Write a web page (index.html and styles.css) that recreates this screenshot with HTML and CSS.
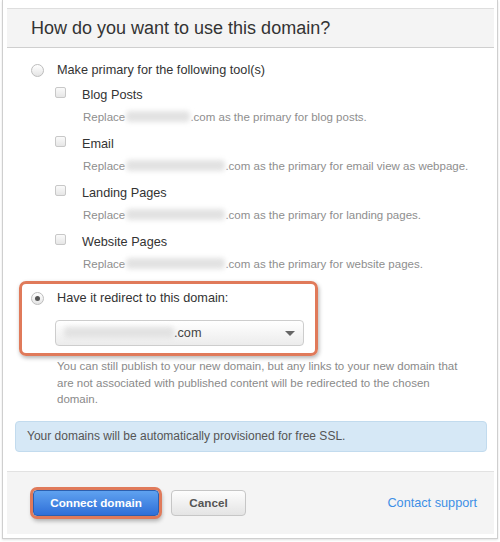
FILE: index.html
```html
<!DOCTYPE html>
<html>
<head>
<meta charset="utf-8">
<link rel="stylesheet" href="styles.css">
</head>
<body>
<div class="frame">
  <div class="modal">
    <div class="header"><h2 class="title">How do you want to use this domain?</h2></div>
    <div class="content">
      <div class="row radio-row">
        <span class="radio"></span>
        <span class="label">Make primary for the following tool(s)</span>
      </div>
      <div class="tools">
        <div class="tool">
          <div class="row"><span class="check"></span><span class="label">Blog Posts</span></div>
          <div class="desc">Replace <span class="blur w62"></span>.com as the primary for blog posts.</div>
        </div>
        <div class="tool">
          <div class="row"><span class="check"></span><span class="label">Email</span></div>
          <div class="desc">Replace <span class="blur w97"></span>.com as the primary for email view as webpage.</div>
        </div>
        <div class="tool">
          <div class="row"><span class="check"></span><span class="label">Landing Pages</span></div>
          <div class="desc">Replace <span class="blur w97"></span>.com as the primary for landing pages.</div>
        </div>
        <div class="tool">
          <div class="row"><span class="check"></span><span class="label">Website Pages</span></div>
          <div class="desc">Replace <span class="blur w97"></span>.com as the primary for website pages.</div>
        </div>
      </div>
      <div class="highlight">
        <div class="row">
          <span class="radio checked"></span>
          <span class="label">Have it redirect to this domain:</span>
        </div>
        <div class="select">
          <span class="select-value"><span class="blur w108"></span>.com</span>
          <span class="caret"></span>
        </div>
      </div>
      <p class="help">You can still publish to your new domain, but any links to your new domain that are not associated with published content will be redirected to the chosen domain.</p>
      <div class="alert">Your domains will be automatically provisioned for free SSL.</div>
    </div>
    <div class="footer">
      <div class="buttons">
        <button class="btn btn-primary">Connect domain</button>
        <button class="btn btn-default">Cancel</button>
      </div>
      <a class="link" href="#">Contact support</a>
    </div>
  </div>
</div>
</body>
</html>
```

FILE: styles.css
```css
* { box-sizing: border-box; }
html, body { margin: 0; padding: 0; background: #fff; }
body {
  width: 500px;
  height: 542px;
  overflow: hidden;
  font-family: "Liberation Sans", Arial, sans-serif;
  color: #333;
}
.frame {
  margin-left: 2px;
  width: 496px;
  height: 539px;
  border: 1px solid #cfcfcf;
  border-top: none;
  box-shadow: 0 1px 2px rgba(0,0,0,0.12);
  padding: 8px 3px 0 4px;
}
.modal { display: flex; flex-direction: column; }
.header {
  height: 40px;
  background: #f4f4f4;
  border-top: 1px solid #dedede;
  border-bottom: 1px solid #cfcfcf;
  display: flex;
  align-items: center;
  padding-left: 24px;
}
.title {
  margin: 0;
  font-weight: normal;
  font-size: 18px;
  color: #333;
}
.content {
  padding: 12px 7px 19px 0;
}
.row {
  display: flex;
  align-items: center;
  height: 20px;
}
.radio-row { margin-left: 24px; }
.label { font-size: 12.7px; color: #333; }
.radio {
  width: 13px;
  height: 13px;
  border-radius: 50%;
  border: 1px solid #bdbdbd;
  background: linear-gradient(#fff, #e4e4e4);
  margin-right: 13px;
  position: relative;
  flex: none;
}
.radio.checked::after {
  content: "";
  position: absolute;
  left: 3px;
  top: 3px;
  width: 5px;
  height: 5px;
  border-radius: 50%;
  background: #555;
}
.tools { margin-left: 48px; margin-top: 5px; }
.tool { margin-bottom: 8px; }
.check {
  width: 11px;
  height: 11px;
  border: 1px solid #c8c8c8;
  border-radius: 2px;
  background: linear-gradient(#fafafa, #e6e6e6);
  margin-right: 16px;
  margin-top: -5px;
  flex: none;
}
.desc {
  margin-top: 3px;
  margin-left: 28px;
  height: 18px;
  line-height: 18px;
  font-size: 11.5px;
  color: #8e8e8e;
  white-space: nowrap;
}
.blur {
  display: inline-block;
  height: 11px;
  vertical-align: -1px;
  background: #e2e2e2;
  border-radius: 4px;
  filter: blur(2.5px);
  margin-left: -2px;
}
.w62 { width: 64px; }
.w97 { width: 99px; }
.w108 { width: 110px; margin-left: 0; }
.highlight {
  margin-left: 12px;
  margin-top: 3px;
  width: 299px;
  border: 3px solid #e07a5a;
  border-radius: 7px;
  box-shadow: 1px 2px 4px rgba(0,0,0,0.3);
  padding: 4px 11px 7px 9px;
}
.select {
  margin-top: 12px;
  margin-left: 24px;
  height: 26px;
  border: 1px solid #cdcdcd;
  border-radius: 4px;
  background: linear-gradient(#fff, #ececec);
  display: flex;
  align-items: center;
  justify-content: space-between;
  padding: 0 8px 0 8px;
  font-size: 12.7px;
  color: #444;
}
.caret {
  width: 0;
  height: 0;
  border-left: 5px solid transparent;
  border-right: 5px solid transparent;
  border-top: 5px solid #666;
}
.help {
  margin: 2px 0 0 50px;
  width: 405px;
  font-size: 11.5px;
  line-height: 16.5px;
  color: #8a8a8a;
}
.alert {
  margin: 13px 0 0 8px;
  height: 31px;
  background: #d6e8f6;
  border: 1px solid #c2dbee;
  border-radius: 4px;
  display: flex;
  align-items: center;
  padding-left: 11px;
  font-size: 12px;
  color: #555;
}
.footer {
  height: 63px;
  background: #f4f4f4;
  border-top: 1px solid #e2e2e2;
  display: flex;
  align-items: center;
  justify-content: space-between;
  padding: 0 17px 0 26px;
}
.buttons { display: flex; gap: 12px; align-items: center; }
.btn {
  height: 26px;
  border-radius: 4px;
  font-family: "Liberation Sans", Arial, sans-serif;
  font-size: 11.7px;
  font-weight: bold;
  padding: 0;
  cursor: pointer;
}
.btn-primary {
  width: 126px;
  color: #fff;
  border: 1px solid #2c5fae;
  background: linear-gradient(#5fa2f0, #2f6fd8);
  box-shadow: 0 0 0 3px #e07a5a, 1px 3px 4px 2px rgba(0,0,0,0.3);
}
.btn-default {
  width: 75px;
  color: #555;
  border: 1px solid #c6c6c6;
  background: linear-gradient(#fdfdfd, #e4e4e4);
}
.link {
  font-size: 12.7px;
  color: #3d8fe6;
  text-decoration: none;
}
```
